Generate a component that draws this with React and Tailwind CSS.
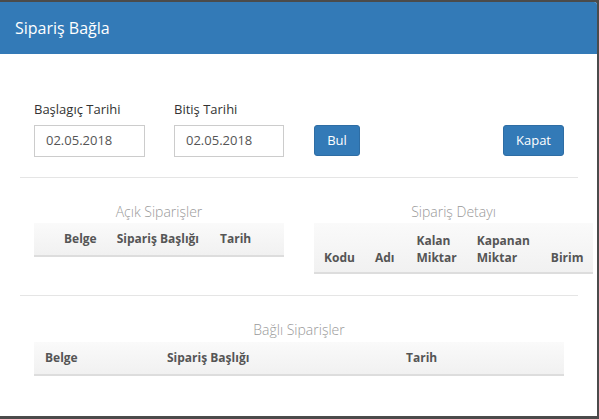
export default function App() {
  const font = { fontFamily: '"Open Sans", "Noto Sans", sans-serif' };
  return (
    <div className="h-[419px] w-[599px] overflow-hidden bg-[#4b4b4b] pt-[2px]" style={font}>
      <div className="flex h-[414px] w-[597px] flex-col overflow-hidden rounded-tr-[3px] bg-white">
        {/* Header */}
        <div className="flex h-[52px] items-center bg-[#337ab7] px-[15px]">
          <h4 className="text-[16px] text-white">Sipariş Bağla</h4>
        </div>

        <div className="pl-[20px] pr-[19px]">
          {/* Filters */}
          <div className="flex items-end pl-[14px] pt-[46px]">
            <div className="w-[140px]">
              <label className="mb-[7px] block text-[13px] leading-[18px] text-[#333]">Başlagıç Tarihi</label>
              <div className="flex h-[32px] w-[111px] items-center border border-[#ccc] pl-[11px] text-[13px] text-[#555]">
                02.05.2018
              </div>
            </div>
            <div className="w-[140px]">
              <label className="mb-[7px] block text-[13px] leading-[18px] text-[#333]">Bitiş Tarihi</label>
              <div className="flex h-[32px] w-[110px] items-center border border-[#ccc] pl-[11px] text-[13px] text-[#555]">
                02.05.2018
              </div>
            </div>
            <button className="mb-[1px] h-[31px] w-[46px] rounded-[3px] border border-[#2e6da4] bg-[#337ab7] text-[13px] text-white">
              Bul
            </button>
            <button className="mb-[1px] ml-auto mr-[14px] h-[31px] w-[61px] rounded-[3px] border border-[#2e6da4] bg-[#337ab7] text-[13px] text-white">
              Kapat
            </button>
          </div>

          <hr className="mt-[20px] border-[#e5e5e5]" />

          {/* Açık Siparişler + Sipariş Detayı */}
          <div className="mt-[24px] flex items-start pl-[14px]">
            <div className="w-[250px] shrink-0">
              <div className="text-center text-[14px] font-light leading-[20px] text-[#999]">Açık Siparişler</div>
              <div className="mt-[1px] flex h-[34px] items-center border-b-2 border-[#ddd] bg-gradient-to-b from-[#fafafa] to-[#f1f1f1] pl-[30px] text-[12px] font-bold text-[#555]">
                <span>Belge</span>
                <span className="ml-[20px]">Sipariş Başlığı</span>
                <span className="ml-[21px]">Tarih</span>
              </div>
            </div>
            <div className="ml-[30px] w-[279px] shrink-0">
              <div className="text-center text-[14px] font-light leading-[20px] text-[#999]">Sipariş Detayı</div>
              <div className="mt-[1px] flex h-[51px] items-end border-b-2 border-[#ddd] bg-gradient-to-b from-[#fafafa] to-[#f1f1f1] pb-[6px] pl-[10px] text-[12px] font-bold leading-[17px] text-[#555]">
                <span>Kodu</span>
                <span className="ml-[20px]">Adı</span>
                <span className="ml-[22px]">Kalan<br />Miktar</span>
                <span className="ml-[20px]">Kapanan<br />Miktar</span>
                <span className="ml-[21px]">Birim</span>
              </div>
            </div>
          </div>

          <hr className="mt-[21px] border-[#e5e5e5]" />

          {/* Bağlı Siparişler */}
          <div className="mt-[24px] pl-[14px] pr-[14px]">
            <div className="text-center text-[14px] font-light leading-[20px] text-[#999]">Bağlı Siparişler</div>
            <div className="mt-[2px] flex h-[34px] items-center border-b-2 border-[#ddd] bg-gradient-to-b from-[#fafafa] to-[#f1f1f1] text-[12px] font-bold text-[#555]">
              <span className="w-[133px] pl-[11px]">Belge</span>
              <span className="w-[239px]">Sipariş Başlığı</span>
              <span>Tarih</span>
            </div>
          </div>
        </div>
      </div>
    </div>
  );
}
